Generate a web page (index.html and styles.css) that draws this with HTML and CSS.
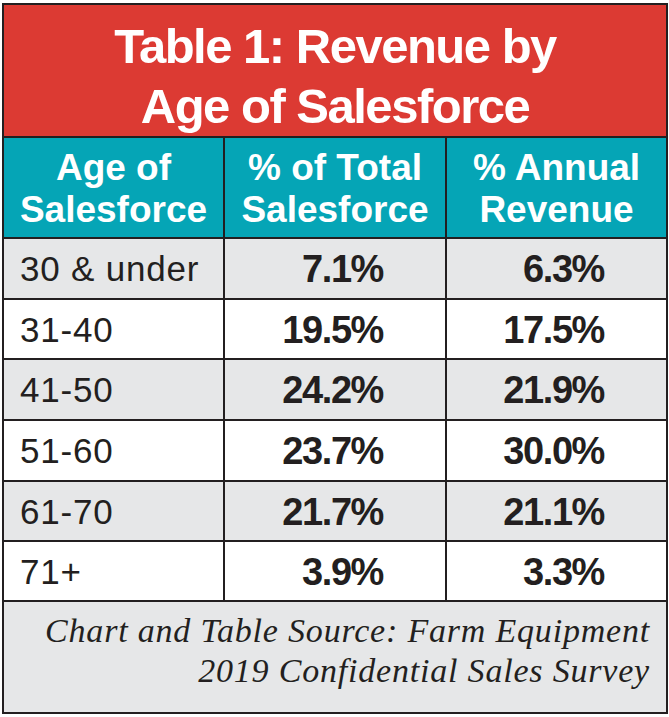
FILE: index.html
```html
<!DOCTYPE html>
<html lang="en">
<head>
<meta charset="utf-8">
<title>Table 1: Revenue by Age of Salesforce</title>
<link rel="stylesheet" href="styles.css">
</head>
<body>
<div class="card">
  <h1 class="title">Table 1: Revenue by<br>Age of Salesforce</h1>
  <div class="grid">
    <div class="head">Age of<br>Salesforce</div>
    <div class="head">% of Total<br>Salesforce</div>
    <div class="head">% Annual<br>Revenue</div>

    <div class="cell label gray r1">30 &amp; under</div>
    <div class="cell val gray r1">7.1%</div>
    <div class="cell val gray r1">6.3%</div>

    <div class="cell label r2">31-40</div>
    <div class="cell val r2">19.5%</div>
    <div class="cell val r2">17.5%</div>

    <div class="cell label gray r3">41-50</div>
    <div class="cell val gray r3">24.2%</div>
    <div class="cell val gray r3">21.9%</div>

    <div class="cell label r4">51-60</div>
    <div class="cell val r4">23.7%</div>
    <div class="cell val r4">30.0%</div>

    <div class="cell label gray r5">61-70</div>
    <div class="cell val gray r5">21.7%</div>
    <div class="cell val gray r5">21.1%</div>

    <div class="cell label r6">71+</div>
    <div class="cell val r6">3.9%</div>
    <div class="cell val r6">3.3%</div>

    <div class="foot">Chart and Table Source: Farm Equipment<br>2019 Confidential Sales Survey</div>
  </div>
</div>
</body>
</html>
```

FILE: styles.css
```css
html, body {
  margin: 0;
  padding: 0;
  background: #ffffff;
}

body {
  padding: 3px 1px 3px 2px;
}

.card {
  width: 666px;
  box-sizing: border-box;
  border: 2px solid #231f20;
  background: #231f20;
  color: #231f20;
}

.title {
  margin: 0;
  background: #dc3a33;
  color: #ffffff;
  font-family: "Liberation Sans", Arial, sans-serif;
  font-weight: 700;
  font-size: 49px;
  line-height: 60px;
  letter-spacing: -1.5px;
  text-align: center;
  padding: 11px 0 0;
  height: 131px;
  box-sizing: border-box;
}

.grid {
  margin-top: 2px;
  display: grid;
  grid-template-columns: 219px 220px 219px;
  grid-template-rows: 99px 59px 58px 59px 59px 58px 58px 110px;
  gap: 2px;
}

.head {
  background: #05a5b6;
  color: #ffffff;
  font-family: "Liberation Sans", Arial, sans-serif;
  font-weight: 700;
  font-size: 37px;
  line-height: 42px;
  text-align: center;
  padding-top: 9px;
  box-sizing: border-box;
}

.cell {
  background: #ffffff;
  font-family: "Liberation Sans", Arial, sans-serif;
  display: flex;
  align-items: center;
}

.cell.gray {
  background: #e6e7e8;
}

.label {
  font-size: 35px;
  letter-spacing: 0.8px;
  padding-left: 16px;
  padding-top: 1px;
}

.val {
  justify-content: flex-end;
  font-weight: 700;
  font-size: 38px;
  letter-spacing: -1.4px;
  padding-right: 62px;
  padding-top: 2px;
}

.foot {
  grid-column: 1 / -1;
  background: #e6e7e8;
  font-family: "Liberation Serif", "Times New Roman", serif;
  font-style: italic;
  font-size: 34px;
  line-height: 40px;
  letter-spacing: 0.8px;
  text-align: right;
  padding: 9px 16px 0 0;
  box-sizing: border-box;
}
```
